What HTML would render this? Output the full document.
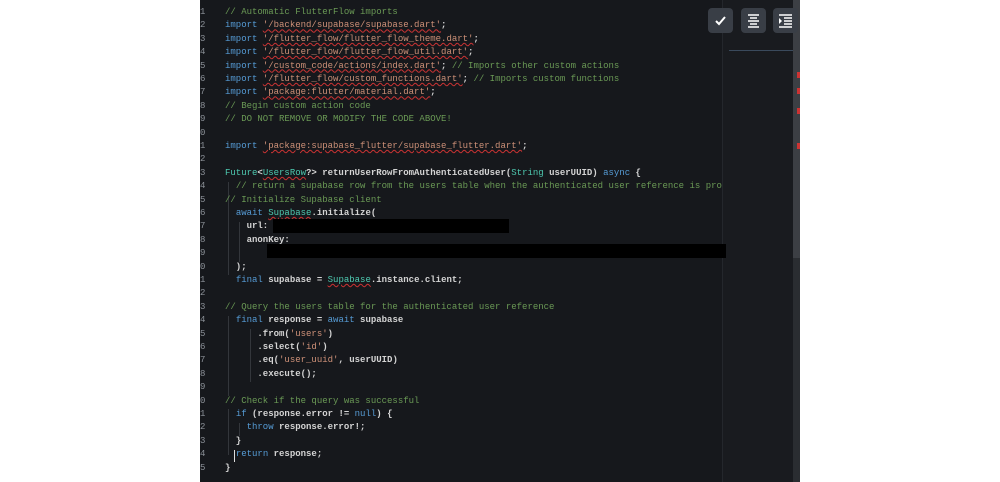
<!DOCTYPE html>
<html><head><style>
body{margin:0;width:1000px;height:482px;background:#fff;position:relative;overflow:hidden}
#ed{position:absolute;left:200px;top:0;width:600px;height:482px;background:#16181c;overflow:hidden}
#mm{position:absolute;left:522px;top:0;width:71px;height:482px;background:#191b1f;border-left:1px solid #24272c}
#sb{position:absolute;left:593px;top:0;width:7px;height:482px;background:#2a2d31}
#th{position:absolute;left:593px;top:0;width:7px;height:258px;background:#3c3f44}
.ln{position:absolute;left:0;width:12px;font:9px "Liberation Mono",monospace;color:#8a8f96;height:13.4px;line-height:13.4px}
.c{position:absolute;left:25px;font:9px "Liberation Mono",monospace;color:#d4d4d4;white-space:pre;height:13.4px;line-height:13.4px;font-weight:bold}
.k{color:#569cd6;font-weight:normal}.s{color:#ce9178;font-weight:normal;text-decoration:underline wavy #c33;text-decoration-thickness:1px}
.s2{color:#ce9178;font-weight:normal}
.m{color:#6a9955;font-weight:normal}.t{color:#4ec9b0;font-weight:normal}.tu{color:#4ec9b0;font-weight:normal;text-decoration:underline wavy #c33;text-decoration-thickness:1px}
.btn{position:absolute;top:8px;width:25px;height:25px;background:#393e46;border-radius:4px}
.red{position:absolute;background:#000}
.g{position:absolute;width:1px;background:#33363b}
</style></head><body>
<div id="ed">
<div id="mm"></div><div id="sb"></div><div id="th"></div>
<div style="position:absolute;left:529px;top:50px;width:64px;height:1px;background:#3a4a5c"></div>
<div style="position:absolute;left:597px;top:72px;width:3px;height:6px;background:#c33"></div>
<div style="position:absolute;left:597px;top:88px;width:3px;height:6px;background:#c33"></div>
<div style="position:absolute;left:597px;top:108px;width:3px;height:6px;background:#c33"></div>
<div style="position:absolute;left:597px;top:143px;width:3px;height:6px;background:#c33"></div>
<div class="g" style="left:28px;top:182px;height:93px"></div>
<div class="g" style="left:39px;top:222px;height:40px"></div>
<div class="g" style="left:28px;top:316px;height:80px"></div>
<div class="g" style="left:50px;top:329px;height:53px"></div>
<div class="g" style="left:28px;top:409px;height:46px"></div>
<div class="g" style="left:39px;top:423px;height:13px"></div>
<div id="lines"></div>
<div class="red" style="left:73px;top:219px;width:236px;height:14px"></div>
<div class="red" style="left:67px;top:244px;width:459px;height:14px"></div>
<div style="position:absolute;left:34px;top:450px;width:1px;height:12px;background:#ddd"></div>
</div>
<div class="btn" style="left:708px"><svg width="25" height="25"><path d="M8 13l3 3 6-7" stroke="#fff" stroke-width="2" fill="none"/></svg></div>
<div class="btn" style="left:741px"><svg width="25" height="25"><path d="M7 7h11M9 10h7M7 13h11M9 16h7M7 19h11" stroke="#fff" stroke-width="1.6"/></svg></div>
<div class="btn" style="left:773px"><svg width="25" height="25"><path d="M6 7h13M11 10h8M11 13h8M11 16h8M6 19h13" stroke="#fff" stroke-width="1.6"/><path d="M6 10l3 3-3 3z" fill="#fff"/></svg></div>
<script>
var L=[
'<span class="m">// Automatic FlutterFlow imports</span>',
'<span class="k">import</span> <span class="s">\'/backend/supabase/supabase.dart\'</span>;',
'<span class="k">import</span> <span class="s">\'/flutter_flow/flutter_flow_theme.dart\'</span>;',
'<span class="k">import</span> <span class="s">\'/flutter_flow/flutter_flow_util.dart\'</span>;',
'<span class="k">import</span> <span class="s">\'/custom_code/actions/index.dart\'</span>; <span class="m">// Imports other custom actions</span>',
'<span class="k">import</span> <span class="s">\'/flutter_flow/custom_functions.dart\'</span>; <span class="m">// Imports custom functions</span>',
'<span class="k">import</span> <span class="s">\'package:flutter/material.dart\'</span>;',
'<span class="m">// Begin custom action code</span>',
'<span class="m">// DO NOT REMOVE OR MODIFY THE CODE ABOVE!</span>',
'',
'<span class="k">import</span> <span class="s">\'package:supabase_flutter/supabase_flutter.dart\'</span>;',
'',
'<span class="t">Future</span>&lt;<span class="tu">UsersRow</span>?&gt; returnUserRowFromAuthenticatedUser(<span class="t">String</span> userUUID) <span class="k">async</span> {',
'  <span class="m">// return a supabase row from the users table when the authenticated user reference is pro</span>',
'<span class="m">// Initialize Supabase client</span>',
'  <span class="k">await</span> <span class="tu">Supabase</span>.initialize(',
'    url:',
'    anonKey:',
'',
'  );',
'  <span class="k">final</span> supabase = <span class="tu">Supabase</span>.instance.client;',
'',
'<span class="m">// Query the users table for the authenticated user reference</span>',
'  <span class="k">final</span> response = <span class="k">await</span> supabase',
'      .from(<span class="s2">\'users\'</span>)',
'      .select(<span class="s2">\'id\'</span>)',
'      .eq(<span class="s2">\'user_uuid\'</span>, userUUID)',
'      .execute();',
'',
'<span class="m">// Check if the query was successful</span>',
'  <span class="k">if</span> (response.error != <span class="k">null</span>) {',
'    <span class="k">throw</span> response.error!;',
'  }',
'  <span class="k">return</span> response;',
'}'];
var h='';
for(var i=0;i<L.length;i++){var y=6+13.4*i;var n=(i+1)%10;
h+='<div class="ln" style="top:'+y+'px">'+n+'</div><div class="c" style="top:'+y+'px">'+L[i]+'</div>';}
document.getElementById('lines').innerHTML=h;
</script>
</body></html>
